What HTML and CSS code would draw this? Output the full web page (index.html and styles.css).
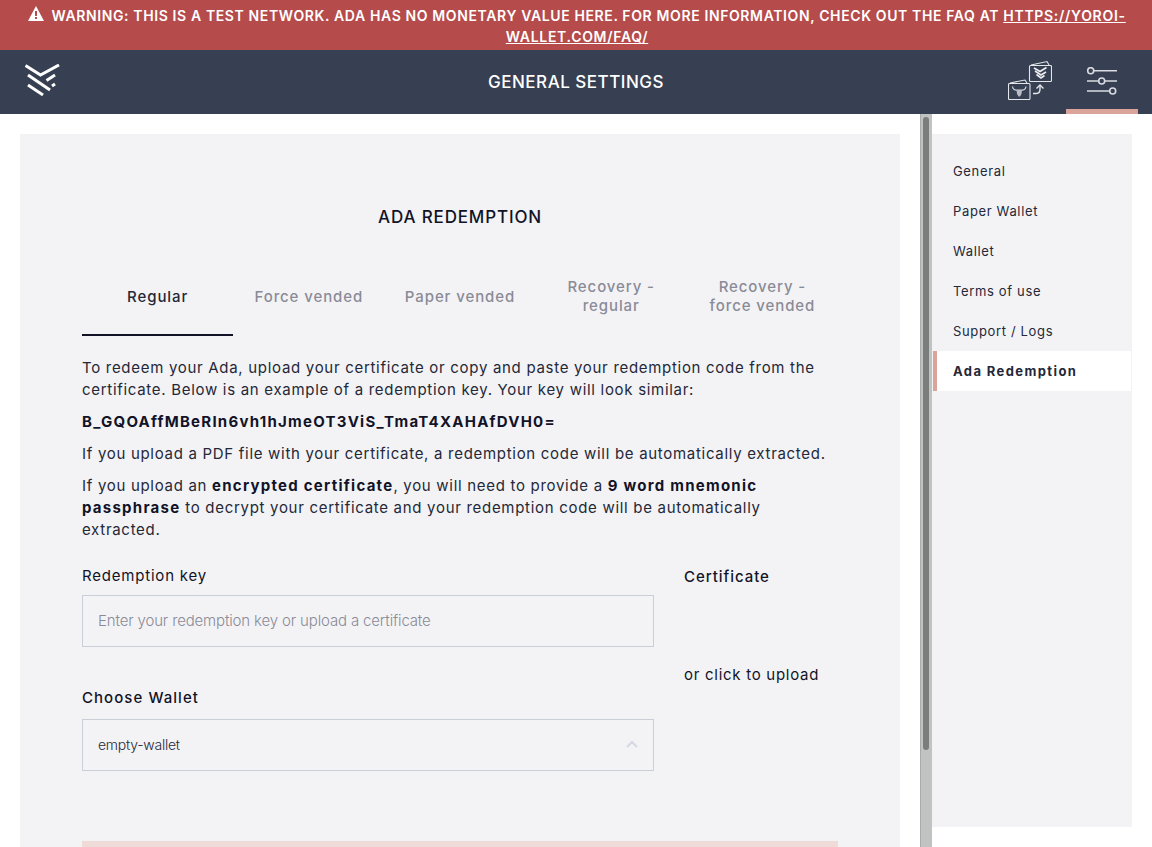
FILE: index.html
```html
<!DOCTYPE html>
<html lang="en">

<head>
    <meta charset="UTF-8">
    <title>Yoroi - General Settings</title>
    <link rel="stylesheet" href="styles.css">
</head>

<body>
    <div class="warning">
        <svg class="warning-icon" viewBox="0 0 16 15">
            <path d="M8 0 L16 15 H0 Z M7 5 V10 H9 V5 Z M7 11 V13 H9 V11 Z" fill="#fff" fill-rule="evenodd" />
        </svg>
        WARNING: THIS IS A TEST NETWORK. ADA HAS NO MONETARY VALUE HERE. FOR MORE INFORMATION, CHECK OUT THE FAQ AT
        <a href="#">HTTPS://YOROI-WALLET.COM/FAQ/</a>
    </div>

    <header class="topbar">
        <svg class="logo" viewBox="0 0 35 32">
            <g fill="none" stroke="#fff" stroke-width="3">
                <path d="M0.5 1.5 L15.5 11 L34 1" />
                <path d="M3 11 L25 26" />
                <path d="M3 21 L18 31" />
                <path d="M21.5 16.5 L30 11" />
                <path d="M30 20 L27 22" />
            </g>
        </svg>
        <div class="title">GENERAL SETTINGS</div>
        <div class="top-actions">
            <div class="action">
                <svg class="send-icon" viewBox="0 0 44 40">
                    <g fill="none" stroke="#e4e6ea" stroke-width="1.1">
                        <rect x="21.5" y="5.5" width="22" height="16" rx="1" />
                        <path d="M23 5 L39 1.5 L41 5" />
                        <rect x="0.5" y="23.5" width="21.5" height="16" rx="1" />
                        <path d="M2 23 L17 20 L19 23" />
                        <path d="M25 33.5 H28.5 Q32 33.5 32 29 V25.5" stroke-width="1.4" />
                        <path d="M28.5 28.5 L32 25 L35.5 28.5" stroke-width="1.4" />
                    </g>
                    <g fill="none" stroke="#eceef1" stroke-width="1.6">
                        <path d="M26 8 L32 11.5 L38.5 7.5" />
                        <path d="M27 11 L33 15 L38 12" />
                        <path d="M28.5 14.5 L33 18 L36.5 15.5" />
                    </g>
                    <path d="M4.5 26.5 Q5 30.5 9 30 H13.5 Q17.5 30.5 18 26.5" fill="none" stroke="#d5d7dc" stroke-width="1.2" />
                    <path d="M8.5 30 H14 L13.5 34 L12 36.5 H10.5 L9 34 Z" fill="#b9bcc4" />
                </svg>
            </div>
            <div class="action active">
                <svg class="sliders-icon" viewBox="0 0 30 28">
                    <g fill="none" stroke="#d9dbe0" stroke-width="1.6">
                        <path d="M7 3.7 H30 M0 14 H11 M18 14 H30 M0 24 H22" />
                        <circle cx="3.7" cy="3.7" r="3" />
                        <circle cx="14.7" cy="14" r="3" />
                        <circle cx="25.7" cy="24" r="3" />
                    </g>
                </svg>
            </div>
        </div>
    </header>

    <div class="page">
        <div class="scroll-area">
            <main class="card">
                <h1>ADA REDEMPTION</h1>
                <div class="tabs">
                    <div class="tab selected">Regular</div>
                    <div class="tab">Force vended</div>
                    <div class="tab">Paper vended</div>
                    <div class="tab">Recovery - regular</div>
                    <div class="tab">Recovery - force vended</div>
                </div>
                <div class="instructions">
                    <p>To redeem your Ada, upload your certificate or copy and paste your redemption code from the certificate. Below is an example of a redemption key. Your key will look similar:</p>
                    <p><b>B_GQOAffMBeRIn6vh1hJmeOT3ViS_TmaT4XAHAfDVH0=</b></p>
                    <p>If you upload a PDF file with your certificate, a redemption code will be automatically extracted.</p>
                    <p>If you upload an <b>encrypted certificate</b>, you will need to provide a <b>9 word mnemonic passphrase</b> to decrypt your certificate and your redemption code will be automatically extracted.</p>
                </div>
                <div class="form">
                    <div class="fields">
                        <label class="label">Redemption key</label>
                        <input class="input" type="text" placeholder="Enter your redemption key or upload a certificate">
                        <label class="label wallet-label">Choose Wallet</label>
                        <div class="select">
                            <span>empty-wallet</span>
                            <svg class="chevron" viewBox="0 0 12 8">
                                <path d="M1 7 L6 2 L11 7" fill="none" stroke="#d5d9e2" stroke-width="2" />
                            </svg>
                        </div>
                    </div>
                    <div class="upload">
                        <div class="label cert-label">Certificate</div>
                        <div class="upload-hint">or click to upload</div>
                    </div>
                </div>
                <div class="submit"></div>
            </main>
            <div class="scrollbar">
                <div class="thumb"></div>
            </div>
        </div>
        <nav class="sidebar">
            <div class="menu-item">General</div>
            <div class="menu-item">Paper Wallet</div>
            <div class="menu-item">Wallet</div>
            <div class="menu-item">Terms of use</div>
            <div class="menu-item">Support / Logs</div>
            <div class="menu-item current">Ada Redemption</div>
        </nav>
    </div>
</body>

</html>
```
FILE: styles.css
```css
* {
    margin: 0;
    padding: 0;
    box-sizing: border-box;
}

html,
body {
    height: 100%;
    overflow: hidden;
}

body {
    display: flex;
    flex-direction: column;
    font-family: Inter, "Liberation Sans", sans-serif;
    color: #121327;
    background-color: #fff;
}

.warning {
    flex: 0 0 50px;
    background-color: #b54b4b;
    color: #fff;
    font-size: 14px;
    font-weight: 600;
    line-height: 21px;
    letter-spacing: 0.62px;
    text-align: center;
    padding: 5px 20px 0 22px;
}

.warning a {
    color: #fff;
    letter-spacing: 0.7px;
}

.warning-icon {
    width: 16px;
    height: 15px;
    margin-right: 3px;
}

.topbar {
    flex: 0 0 64px;
    background-color: #373f52;
    display: flex;
    align-items: center;
    justify-content: space-between;
    padding-left: 25px;
    position: relative;
}

.logo {
    width: 35px;
    height: 32px;
    margin-bottom: 4px;
}

.title {
    position: absolute;
    left: 0;
    right: 0;
    text-align: center;
    color: #fff;
    font-size: 17px;
    font-weight: 500;
    letter-spacing: 0.5px;
    margin-bottom: 1px;
}

.top-actions {
    display: flex;
    align-self: stretch;
    padding-right: 14px;
}

.action {
    width: 72px;
    display: flex;
    justify-content: center;
    padding-top: 10px;
}

.action.active {
    border-bottom: 5px solid #dba49b;
}

.send-icon {
    width: 44px;
    height: 40px;
}

.sliders-icon {
    width: 30px;
    height: 28px;
    margin-top: 7px;
}

.page {
    flex: 1;
    display: flex;
    min-height: 0;
}

.scroll-area {
    flex: 0 0 932px;
    padding: 20px 32px 0 20px;
    position: relative;
    overflow: hidden;
}

.card {
    background-color: #f3f3f6;
    height: 900px;
    padding: 73px 62px 0;
}

h1 {
    font-size: 17px;
    font-weight: 500;
    letter-spacing: 0.85px;
    line-height: 21px;
    text-align: center;
}

.tabs {
    display: flex;
    margin-top: 30px;
    height: 78px;
}

.tab {
    flex: 1;
    display: flex;
    align-items: center;
    justify-content: center;
    text-align: center;
    padding: 0 10px;
    font-size: 15px;
    font-weight: 500;
    line-height: 19px;
    letter-spacing: 0.9px;
    color: #8a8b97;
    border-bottom: 2px solid transparent;
}

.tab.selected {
    color: #242838;
    border-bottom-color: #121327;
}

.instructions {
    margin-top: 21px;
    font-size: 15px;
    line-height: 22px;
    letter-spacing: 0.7px;
    color: #242838;
}

.instructions p {
    margin-bottom: 10px;
}

.instructions b {
    font-weight: 700;
    letter-spacing: 1.25px;
    color: #121327;
}

.form {
    display: flex;
    margin-top: 24px;
}

.fields {
    flex: 0 0 572px;
    padding-top: 1px;
}

.label {
    display: block;
    font-size: 15px;
    line-height: 20px;
    letter-spacing: 0.8px;
}

.wallet-label,
.cert-label {
    font-weight: 500;
    letter-spacing: 0.95px;
}

.input,
.select {
    display: flex;
    align-items: center;
    width: 100%;
    height: 52px;
    margin-top: 9px;
    padding: 0 15px 2px;
    background-color: transparent;
    border: 1px solid #c9ced9;
    font-family: Inter, "Liberation Sans", sans-serif;
    font-size: 15px;
    font-weight: 300;
    letter-spacing: -0.15px;
    color: #242838;
    outline: none;
}

.input::placeholder {
    color: #8a8b97;
    opacity: 1;
}

.wallet-label {
    margin-top: 41px;
    letter-spacing: 1.05px;
}

.select {
    justify-content: space-between;
    margin-top: 11px;
    font-size: 14px;
    letter-spacing: -0.25px;
}

.chevron {
    width: 12px;
    height: 8px;
}

.upload {
    margin-left: 30px;
    padding-top: 2px;
}

.upload-hint {
    margin-top: 78px;
    font-size: 15px;
    line-height: 20px;
    letter-spacing: 0.72px;
}

.submit {
    margin-top: 70px;
    height: 60px;
    background-color: #efdbd8;
}

.scrollbar {
    position: absolute;
    top: 0;
    bottom: 0;
    right: 0;
    width: 12px;
    background-color: #c1c3c2;
    border-left: 1px solid #a9abaa;
    padding: 3px 3px 0 2px;
}

.thumb {
    height: 633px;
    background-color: #7b7d7d;
    border-radius: 3px;
}

.sidebar {
    flex: 0 0 200px;
    margin: 20px 20px 20px 0;
    background-color: #f3f3f6;
    padding-top: 17px;
}

.menu-item {
    height: 40px;
    display: flex;
    align-items: center;
    padding-left: 21px;
    padding-bottom: 1px;
    font-size: 13px;
    letter-spacing: 0.65px;
    color: #242838;
}

.menu-item.current {
    background-color: #fff;
    border-left: 4px solid #dba49b;
    margin: 0 1px;
    padding-left: 16px;
    font-weight: 700;
    letter-spacing: 1.4px;
}
```
